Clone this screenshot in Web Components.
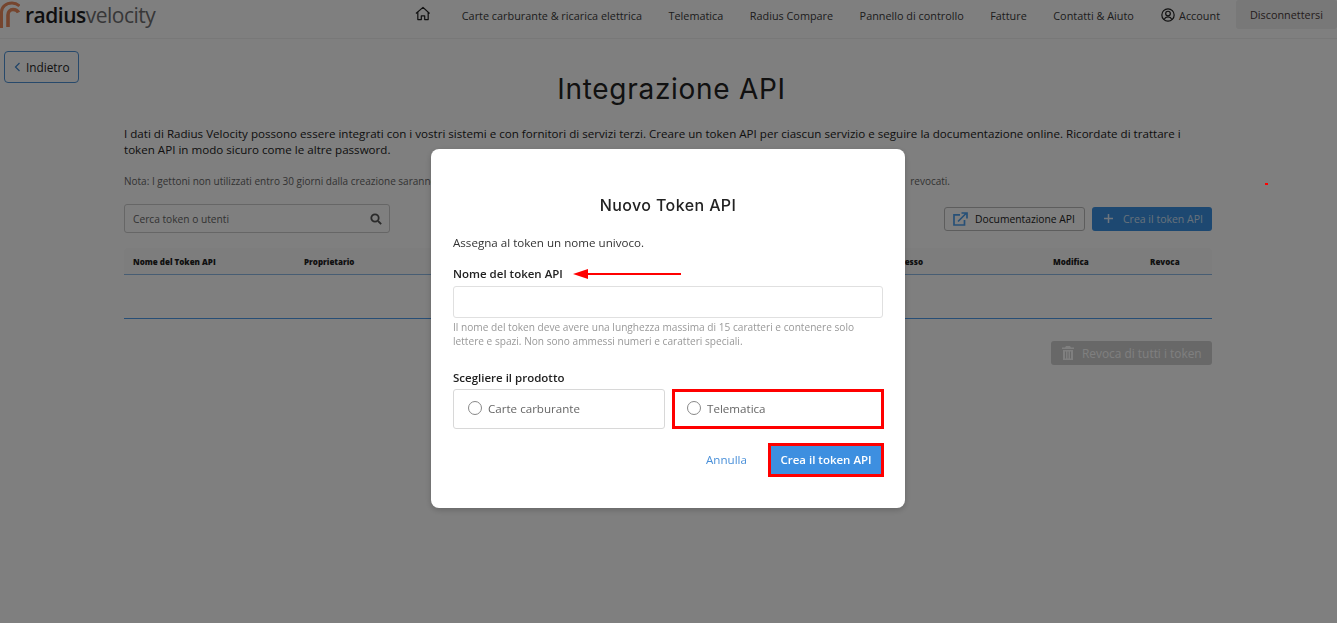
<!DOCTYPE html>
<html lang="it">
<head>
<meta charset="utf-8">
<title>Integrazione API</title>
<style>
  html, body { margin: 0; height: 100%; background: #fff; overflow: hidden; }
  body { font-family: "Open Sans", "Liberation Sans", sans-serif; color: #222; }
</style>
</head>
<body>
<app-header></app-header>
<api-page></api-page>
<token-modal></token-modal>

<script>
// header con logo e navigazione
class AppHeader extends HTMLElement {
  constructor() {
    super();
    this.attachShadow({ mode: 'open' });
  }
  connectedCallback() {
    const links = ['Telematica', 'Radius Compare', 'Pannello di controllo', 'Fatture', 'Contatti &amp; Aiuto'];
    this.shadowRoot.innerHTML = `
    <style>
      :host { display: flex; height: 38px; border-bottom: 1px solid #f1f1f1; align-items: flex-start; font-size: 10.85px; color: #3a3a3a; }
      .logo { display: flex; align-items: center; gap: 5px; height: 30px; flex: none; }
      .logo span { font-size: 21px; font-weight: 600; letter-spacing: -0.5px; color: #1d1d1f; line-height: 30px; }
      .logo i { font-style: normal; font-weight: 400; color: #6e6e70; }
      nav { margin-left: auto; display: flex; align-items: center; height: 30px; }
      a { padding: 0 13.25px; white-space: nowrap; }
      .home { margin-right: 18px; margin-top: -4px; display: flex; }
      .account { display: flex; align-items: center; gap: 4px; padding: 0 16px 0 14px; }
      .out { background: #f0f0f0; border-radius: 3px; height: 29px; width: 101px; display: flex; align-items: center; justify-content: center; padding: 0; align-self: flex-start; color: #4a3a3a; }
    </style>
    <div class="logo">
      <svg width="20" height="28" viewBox="0 0 20 28"><path d="M1.500 27V11C1.500 6 6 2 12 2c3 0 5.500 1 7.500 3" fill="none" stroke="#ec8a5c" stroke-width="3"/><path d="M8 26V14c0-3 2-5.500 5-5.500 2.500 0 4.500 1 5.500 3" fill="none" stroke="#ec8a5c" stroke-width="3.600"/></svg>
      <span>radius<i>velocity</i></span>
    </div>
    <nav>
      <svg class="home" width="16" height="15" viewBox="0 0 17 15" fill="none" stroke="#222" stroke-width="1.300" stroke-linejoin="round"><path d="M1 7.500 8.500 1l7 6.500M3 6.300V14h3.700v-4h3.600v4H14V6.300"/></svg>
      <a>Carte carburante &amp; ricarica elettrica</a>
      ${links.map(l => `<a>${l}</a>`).join('')}
      <a class="account"><svg width="14" height="14" viewBox="0 0 15 15" fill="none" stroke="#222" stroke-width="1.300"><circle cx="7.500" cy="7.500" r="6.600"/><circle cx="7.500" cy="6" r="2.500"/><path d="M3.300 12.300c1-2 2.500-2.800 4.200-2.800s3.200.8 4.200 2.800"/></svg>Account</a>
      <a class="out">Disconnettersi</a>
    </nav>`;
  }
}

// pagina sotto la modale
class ApiPage extends HTMLElement {
  constructor() {
    super();
    this.attachShadow({ mode: 'open' });
  }
  connectedCallback() {
    this.shadowRoot.innerHTML = `
    <style>
      :host { display: block; position: relative; font-size: 12px; color: #222; }
      .back { display: inline-flex; align-items: center; gap: 5px; box-sizing: border-box; width: 75px; height: 32px; margin: 12px 0 0 4px; padding-left: 9px; border: 1px solid #4f93d6; border-radius: 4px; font-size: 11.8px; }
      h1 { font: 400 28px/36px Inter, "Open Sans", sans-serif; text-align: center; margin: -12px 0 0; color: #222; letter-spacing: .7px; padding-left: 6px; }
      .wrap { margin: 0 125px 0 124px; }
      p { margin: 19px 0 0; line-height: 16px; font-size: 11.6px; }
      .note { display: flex; justify-content: space-between; margin-top: 16px; font-size: 10px; line-height: 14px; color: #666; padding-right: 262px; }
      .bar { display: flex; align-items: center; margin-top: 16px; gap: 7px; }
      .search { width: 266px; height: 29px; box-sizing: border-box; border: 1px solid #ccc; border-radius: 3px; display: flex; align-items: center; justify-content: space-between; padding: 0 7px 0 8px; font-size: 10.2px; color: #666; margin-right: auto; }
      .doc, .new { height: 24px; box-sizing: border-box; border-radius: 3px; display: flex; align-items: center; font-size: 10.3px; }
      .doc { width: 141px; border: 1px solid #bbb; gap: 7px; padding-left: 8px; color: #222; }
      .new { width: 120px; background: #3a90e2; color: #cfe2f6; gap: 10px; padding-left: 12px; font-size: 10.5px; }
      .thead { display: grid; grid-template-columns: 171px 619px 130px 97px 1fr; height: 27px; margin-top: 15px; background: #fafafa; border-bottom: 1.500px solid #8fbbe6; border-radius: 4px 4px 0 0; align-items: center; padding-left: 9px; font-size: 8px; font-weight: 700; color: #222; box-sizing: border-box; }
      .thead b { grid-row: 1; }
      .thead .owner, .thead .last { grid-column: 2; }
      .thead .last { text-align: right; }
      .thead .edit { grid-column: 4; }
      .thead .rev { grid-column: 5; }
      .tbody { height: 44px; border-bottom: 1px solid #4f9cec; box-sizing: border-box; }
      .foot { display: flex; justify-content: flex-end; margin-top: 22px; }
      .revoke { width: 161px; height: 24px; background: #d0d0d0; border-radius: 3px; color: #fff; display: flex; align-items: center; gap: 8px; padding-left: 11px; box-sizing: border-box; font-size: 11.9px; }
    </style>
    <div class="back"><svg width="7" height="10" viewBox="0 0 7 10" fill="none" stroke="#3f87cf" stroke-width="1.200"><path d="M5.500 1 1.500 5l4 4"/></svg>Indietro</div>
    <h1>Integrazione API</h1>
    <div class="wrap">
      <p>I dati di Radius Velocity possono essere integrati con i vostri sistemi e con fornitori di servizi terzi. Creare un token API per ciascun servizio e seguire la documentazione online. Ricordate di trattare i token API in modo sicuro come le altre password.</p>
      <div class="note"><span>Nota: I gettoni non utilizzati entro 30 giorni dalla creazione saranno</span><span>revocati.</span></div>
      <div class="bar">
        <div class="search">Cerca token o utenti<svg width="12" height="12" viewBox="0 0 12 12" fill="none" stroke="#555" stroke-width="1.800"><circle cx="5" cy="5" r="3.700"/><path d="m8 8 3.200 3.200"/></svg></div>
        <div class="doc"><svg width="15" height="14" viewBox="0 0 15 14" fill="none" stroke="#4ea0ee" stroke-width="1.700"><path d="M7 2.800H1v10.200h10.500V8"/><path d="M5 9.500 13 1.500M8.500 1H14v5.500"/></svg>Documentazione API</div>
        <div class="new"><svg width="9" height="9" viewBox="0 0 9 9" stroke="#dceafa" stroke-width="1.500"><path d="M4.500 0v9M0 4.500h9"/></svg>Crea il token API</div>
      </div>
      <div class="thead"><b>Nome del Token API</b><b class="owner">Proprietario</b><b class="last">Ultimo accesso</b><b class="edit">Modifica</b><b class="rev">Revoca</b></div>
      <div class="tbody"></div>
      <div class="foot"><div class="revoke"><svg width="12" height="14" viewBox="0 0 12 14" fill="#fff"><path d="M4 0h4l1 1.500h3V3H0V1.500h3zM1 4h10v10H1zm2 1.500v7h1v-7zm2.500 0v7h1v-7zm2.500 0v7h1v-7z" fill-rule="evenodd"/></svg>Revoca di tutti i token</div></div>
    </div>`;
  }
}

// modale con le annotazioni rosse
class TokenModal extends HTMLElement {
  constructor() {
    super();
    this.attachShadow({ mode: 'open' });
  }
  connectedCallback() {
    this.shadowRoot.innerHTML = `
    <style>
      :host { display: block; position: fixed; inset: 0; background: rgba(0,0,0,.5); font-size: 12px; color: #333; }
      .dot { position: absolute; left: 1265px; top: 183px; width: 3px; height: 2px; background: #f00; }
      .box { position: absolute; left: 431px; top: 149px; width: 474px; height: 359px; box-sizing: border-box; background: #fff; border-radius: 8px; padding: 45px 22px 0; box-shadow: 0 2px 6px rgba(0,0,0,.2); }
      h2 { font: 500 16px/23px Inter, "Open Sans", sans-serif; text-align: center; margin: 0; color: #222; letter-spacing: .4px; }
      .intro { margin: 17px 0 0; line-height: 17px; font-size: 11.6px; color: #333; }
      label { display: block; font-weight: 600; font-size: 11.500px; line-height: 16px; color: #222; }
      .name { margin-top: 15px; position: relative; }
      .arrow { position: absolute; left: 120px; top: 0; }
      .input { height: 32px; margin-top: 4px; border: 1px solid #e0e0e0; border-radius: 3px; box-sizing: border-box; }
      .hint { margin: 2px 0 0; font-size: 10.150px; line-height: 14px; color: #999; }
      .prod { margin-top: 22px; }
      .opts { display: grid; grid-template-columns: 212px 212px; gap: 7px; margin-top: 3px; }
      .opt { height: 40px; box-sizing: border-box; display: flex; align-items: center; gap: 6px; padding: 0 0 2px 14px; border: 1px solid #d8d8d8; border-radius: 3px; color: #666; font-size: 11.6px; }
      .opt i { width: 14px; height: 14px; border: 1px solid #888; border-radius: 50%; box-sizing: border-box; }
      .opt.mark { border: 3px solid #f00; border-radius: 0; padding-left: 12px; }
      .actions { display: flex; justify-content: flex-end; align-items: center; gap: 21px; margin: 14px -1px 0 0; }
      .cancel { color: #4a90d9; font-size: 11.6px; padding-bottom: 2px; }
      .go { width: 116px; height: 34px; box-sizing: border-box; border: 3px solid #f00; background: #3d8fe0; color: #fff; font-size: 11.500px; font-weight: 600; display: flex; align-items: center; justify-content: center; padding-bottom: 2px; }
    </style>
    <div class="dot"></div>
    <div class="box">
      <h2>Nuovo Token API</h2>
      <p class="intro">Assegna al token un nome univoco.</p>
      <div class="name">
        <label>Nome del token API</label>
        <svg class="arrow" width="108" height="16" viewBox="0 0 108 16"><path d="M15 7h93v2H15z" fill="#f00"/><path d="M0 8 15 3v10z" fill="#f00"/></svg>
        <div class="input"></div>
      </div>
      <p class="hint">Il nome del token deve avere una lunghezza massima di 15 caratteri e contenere solo lettere e spazi. Non sono ammessi numeri e caratteri speciali.</p>
      <div class="prod">
        <label>Scegliere il prodotto</label>
        <div class="opts">
          <div class="opt"><i></i>Carte carburante</div>
          <div class="opt mark"><i></i>Telematica</div>
        </div>
      </div>
      <div class="actions"><span class="cancel">Annulla</span><div class="go">Crea il token API</div></div>
    </div>`;
  }
}

customElements.define('app-header', AppHeader);
customElements.define('api-page', ApiPage);
customElements.define('token-modal', TokenModal);
</script>
</body>
</html>
